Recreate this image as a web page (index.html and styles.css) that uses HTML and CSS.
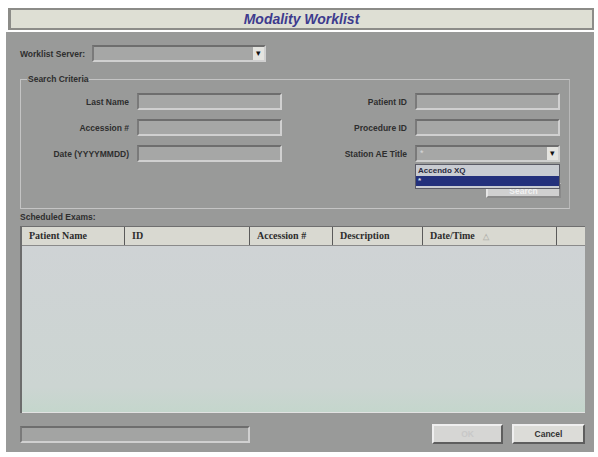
FILE: index.html
```html
<!DOCTYPE html>
<html lang="en">
<head>
  <meta charset="UTF-8">
  <title>Modality Worklist</title>
  <link rel="stylesheet" href="styles.css">
</head>
<body>
  <div class="window">
    <div class="titlebar">Modality Worklist</div>

    <div class="panel">
      <!-- Server selection -->
      <div class="server-row">
        <span class="label">Worklist Server:</span>
        <div class="combo server-combo"><span class="combo-text"></span><span class="combo-btn">&#9662;</span></div>
      </div>

      <!-- Search criteria group -->
      <fieldset class="criteria">
        <legend>Search Criteria</legend>
        <div class="grid">
          <span class="label right">Last Name</span>
          <div class="field"></div>
          <span class="label right">Patient ID</span>
          <div class="field"></div>

          <span class="label right">Accession #</span>
          <div class="field"></div>
          <span class="label right">Procedure ID</span>
          <div class="field"></div>

          <span class="label right">Date (YYYYMMDD)</span>
          <div class="field"></div>
          <span class="label right">Station AE Title</span>
          <div class="combo-wrap">
            <div class="combo"><span class="combo-text">*</span><span class="combo-btn">&#9662;</span></div>
            <div class="popup">
              <div class="popup-item">Accendo XQ</div>
              <div class="popup-item selected">*</div>
            </div>
          </div>
        </div>
        <div class="search-row">
          <button class="btn search-btn">Search</button>
        </div>
      </fieldset>

      <div class="label exams-label">Scheduled Exams:</div>

      <!-- Results table -->
      <div class="table">
        <div class="thead">
          <div class="th c1">Patient Name</div>
          <div class="th c2">ID</div>
          <div class="th c3">Accession #</div>
          <div class="th c4">Description</div>
          <div class="th c5">Date/Time <span class="sort">&#9651;</span></div>
          <div class="th c6"></div>
        </div>
        <div class="tbody"></div>
      </div>

      <!-- Footer -->
      <div class="footer">
        <div class="progress"></div>
        <div class="buttons">
          <button class="btn ok-btn" disabled>OK</button>
          <button class="btn">Cancel</button>
        </div>
      </div>
    </div>
  </div>
</body>
</html>
```

FILE: styles.css
```css
/* Page */
body {
  margin: 0;
  background: #fff;
  font-family: "Liberation Sans", Arial, sans-serif;
}

.window {
  width: 588px;
  margin: 8px 0 0 6px;
}

/* Title bar */
.titlebar {
  height: 18px;
  margin-left: 2px;
  border: 2px solid #8c8c88;
  border-left-width: 3px;
  background: #dedfd4;
  color: #3d3b8e;
  font-size: 14px;
  font-weight: bold;
  font-style: italic;
  line-height: 18px;
  text-align: center;
}

.panel {
  margin-top: 2px;
  background: #999a99;
  padding: 13px 9px 8px 14px;
  height: 399px;
}

.label {
  font-size: 8.5px;
  font-weight: bold;
  color: #2e2e2e;
  white-space: nowrap;
}

.right {
  text-align: right;
  padding-right: 8px;
}

/* Sunken fields */
.field, .combo, .progress {
  box-sizing: border-box;
  height: 17px;
  background: #a6a7a6;
  border: 2px solid #d0d0d0;
  border-top-color: #6e6e6e;
  border-left-color: #7a7a7a;
}

.combo {
  display: flex;
  align-items: stretch;
}

.combo-text {
  flex: 1;
  font-size: 9px;
  color: #d8d8d8;
  padding-left: 3px;
  line-height: 12px;
}

.combo-btn {
  width: 11px;
  background: #e4e4e0;
  color: #111;
  font-size: 9px;
  line-height: 13px;
  text-align: center;
}

.server-row {
  display: flex;
  align-items: center;
  gap: 7px;
}

.server-combo {
  width: 174px;
}

/* Criteria group */
.criteria {
  margin: 12px 15px 0 0;
  padding: 9px 8px 0 0;
  height: 124px;
  border: 1px solid #c4c4c4;
  border-right-color: #b8b8b8;
  position: relative;
}

.criteria legend {
  font-size: 8.5px;
  font-weight: bold;
  color: #2e2e2e;
  padding: 0 1px;
  margin-left: 6px;
}

.grid {
  display: grid;
  grid-template-columns: 116px 145px 133px 145px;
  row-gap: 9px;
  align-items: center;
}

.combo-wrap {
  position: relative;
}

.popup {
  position: absolute;
  top: 19px;
  left: 0;
  right: 0;
  background: #c9ccd2;
  border: 1px solid #5b5b66;
  padding: 1px 0 2px;
  z-index: 2;
}

.popup-item {
  font-size: 8px;
  font-weight: bold;
  color: #2a2a40;
  height: 10px;
  line-height: 10px;
  padding-left: 2px;
}

.popup-item.selected {
  background: #23307c;
  color: #e6e6f0;
}

.search-row {
  display: flex;
  justify-content: flex-end;
  margin-top: 21px;
}

.btn {
  font-family: "Liberation Sans", Arial, sans-serif;
  font-size: 8.5px;
  font-weight: bold;
  color: #333;
  background: #dcdcd8;
  border: 2px solid #5e5e5e;
  border-top-color: #efefef;
  border-left-color: #efefef;
  width: 73px;
  height: 20px;
  padding: 0;
}

.search-btn {
  width: 75px;
  height: 15px;
  color: #f2f2f2;
  background: #d0d0d0;
  border-color: #e6e6e6 #8a8a8a #8a8a8a #e6e6e6;
}

.ok-btn {
  width: 71px;
  color: #c8c8c8;
  background: #d6d6d4;
}

.exams-label {
  margin-top: 4px;
  height: 13px;
  line-height: 8px;
}

/* Results table */
.table {
  width: 565px;
  height: 187px;
  display: flex;
  flex-direction: column;
  border-top: 1px solid #6f6f6f;
  border-left: 2px solid #6c6c6c;
  box-sizing: border-box;
}

.thead {
  display: flex;
  height: 18px;
  background: #d9d9d1;
  border-bottom: 1px solid #8a8a8a;
}

.th {
  box-sizing: border-box;
  border-right: 1px solid #5a5a5a;
  font-family: "Liberation Serif", "Times New Roman", serif;
  font-size: 10px;
  font-weight: bold;
  color: #2d2d2d;
  line-height: 17px;
  padding-left: 7px;
  white-space: nowrap;
}

.c1 { width: 103px; }
.c2 { width: 125px; }
.c3 { width: 83px; }
.c4 { width: 90px; }
.c5 { width: 134px; }
.c6 { flex: 1; border-right: none; }

.sort {
  color: #b5b5b0;
  font-size: 8px;
  margin-left: 6px;
}

.tbody {
  flex: 1;
  background: linear-gradient(#cfd3d5, #ccd5d2 85%, #c4d6cc);
  border-bottom: 1px solid #e2e2e2;
}

/* Footer */
.footer {
  display: flex;
  justify-content: space-between;
  align-items: center;
  margin-top: 11px;
  width: 565px;
}

.progress {
  width: 230px;
  height: 17px;
  background: #a3a4a3;
}

.buttons {
  display: flex;
  gap: 9px;
}
```
